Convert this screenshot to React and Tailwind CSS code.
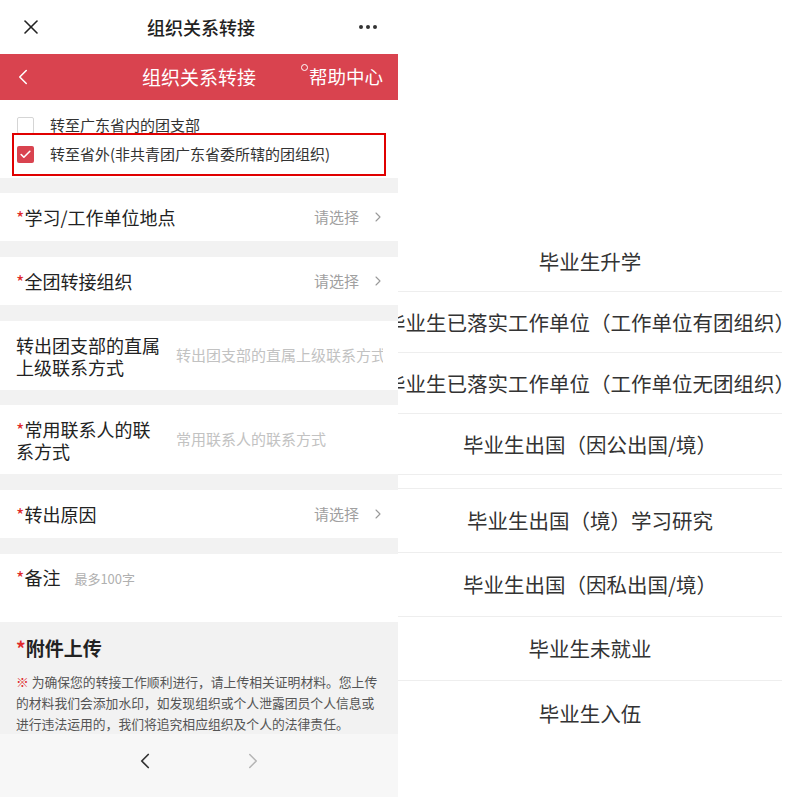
import { X, ChevronLeft, ChevronRight, Check } from "lucide-react";

const font = { fontFamily: '"Noto Sans CJK SC", "Noto Sans", sans-serif' };

const reasons = [
  "毕业生升学",
  "毕业生已落实工作单位（工作单位有团组织）",
  "毕业生已落实工作单位（工作单位无团组织）",
  "毕业生出国（因公出国/境）",
];
const reasons2 = [
  "毕业生出国（境）学习研究",
  "毕业生出国（因私出国/境）",
  "毕业生未就业",
  "毕业生入伍",
];

function Star() {
  return <span className="text-[#e02b2b]">*</span>;
}

function SelectRow({ label }) {
  return (
    <div className="flex h-[48px] items-center bg-white pl-[16px] pr-[12px]">
      <div className="flex-1 text-[18px] text-[#222]">
        <Star />
        {label}
      </div>
      <span className="text-[15px] text-[#a0a0a0]">请选择</span>
      <ChevronRight size={16} strokeWidth={1.6} className="ml-[11px] text-[#999]" />
    </div>
  );
}

function InputRow({ star, line1, line2, placeholder }) {
  return (
    <div className="flex h-[69px] items-center overflow-hidden bg-white pl-[16px] pr-[15px]">
      <div className="w-[160px] shrink-0 text-[18px] leading-[22px] text-[#222]">
        {star && <Star />}
        {line1}
        <br />
        {line2}
      </div>
      <div className="min-w-0 flex-1 overflow-hidden whitespace-nowrap text-[15px] text-[#c2c2c2]">
        {placeholder}
      </div>
    </div>
  );
}

function Gap({ h }) {
  return <div className={h} />;
}

export default function App() {
  return (
    <div className="flex h-[797px] w-[797px] overflow-hidden bg-white" style={font}>
      {/* form screen */}
      <div className="flex w-[398px] shrink-0 flex-col overflow-hidden bg-[#f2f2f2]">
        <div className="flex h-[54px] items-center justify-between bg-white px-[19px]">
          <X size={24} strokeWidth={1.6} className="text-[#222]" />
          <span className="text-[18px] font-medium text-[#222]">组织关系转接</span>
          <div className="flex gap-[3px] pr-[2px]">
            <span className="h-[4px] w-[4px] rounded-full bg-[#333]" />
            <span className="h-[4px] w-[4px] rounded-full bg-[#333]" />
            <span className="h-[4px] w-[4px] rounded-full bg-[#333]" />
          </div>
        </div>

        <div className="relative flex h-[46px] items-center justify-center bg-[#d9434f] text-white">
          <ChevronLeft size={26} strokeWidth={1.4} className="absolute left-[10px]" />
          <span className="text-[19px]">组织关系转接</span>
          <span className="absolute right-[15px] flex items-start text-[18.5px]">
            <span className="mt-[1px] mr-[1px] h-[7px] w-[7px] rounded-full border border-white" />
            帮助中心
          </span>
        </div>

        <div className="flex h-[78px] flex-col bg-white px-[12px] pt-[17px]">
          <div className="flex h-[16px] items-center pl-[5px]">
            <span className="h-[17px] w-[17px] rounded-[2px] border border-[#d5d5d5]" />
            <span className="ml-[16px] text-[15px] text-[#333]">转至广东省内的团支部</span>
          </div>
          <div className="flex h-[43px] items-center border-2 border-[#e00000] pl-[3px]">
            <span className="flex h-[17px] w-[17px] items-center justify-center rounded-[2px] bg-[#d9434f]">
              <Check size={13} strokeWidth={3} className="text-white" />
            </span>
            <span className="ml-[16px] text-[15px] text-[#333]">
              转至省外(非共青团广东省委所辖的团组织)
            </span>
          </div>
        </div>

        <Gap h="h-[15px]" />
        <SelectRow label="学习/工作单位地点" />
        <Gap h="h-[16px]" />
        <SelectRow label="全团转接组织" />
        <Gap h="h-[16px]" />
        <InputRow line1="转出团支部的直属" line2="上级联系方式" placeholder="转出团支部的直属上级联系方式" />
        <Gap h="h-[15px]" />
        <InputRow star line1="常用联系人的联" line2="系方式" placeholder="常用联系人的联系方式" />
        <Gap h="h-[16px]" />
        <SelectRow label="转出原因" />
        <Gap h="h-[16px]" />
        <div className="flex h-[68px] items-start bg-white pl-[16px] pt-[10px]">
          <span className="text-[18px] text-[#222]">
            <Star />
            备注
          </span>
          <span className="ml-[14px] mt-[5px] text-[13px] text-[#b0b0b0]">最多100字</span>
        </div>

        <div className="h-[112px] px-[16px] pt-[12px]">
          <div className="text-[19px] font-bold leading-[28px] text-[#222]">
            <Star />
            附件上传
          </div>
          <div className="mt-[9px] whitespace-nowrap text-[12.8px] leading-[21px] text-[#555]">
            <div>
              <span className="text-[#e02b2b]">※</span> 为确保您的转接工作顺利进行，请上传相关证明材料。您上传
            </div>
            <div>的材料我们会添加水印，如发现组织或个人泄露团员个人信息或</div>
            <div>进行违法运用的，我们将追究相应组织及个人的法律责任。</div>
          </div>
        </div>

        <div className="flex flex-1 items-start justify-center gap-[82px] bg-[#f7f7f7] pt-[14px]">
          <ChevronLeft size={26} strokeWidth={1.6} className="text-[#333]" />
          <ChevronRight size={26} strokeWidth={1.4} className="text-[#b5b5b5]" />
        </div>
      </div>

      {/* reason picker */}
      <div className="flex flex-1 flex-col pt-[231px]">
        <div className="w-[384px]">
          {reasons.map((r) => (
            <div
              key={r}
              className="flex h-[61px] items-center justify-center overflow-hidden border-b border-[#eeeeee] whitespace-nowrap text-[20.5px] text-[#333]"
            >
              {r}
            </div>
          ))}
          <div className="h-[14px] border-b border-[#eeeeee]" />
          {reasons2.map((r, i) => (
            <div
              key={r}
              className={`flex h-[64px] items-center justify-center overflow-hidden whitespace-nowrap text-[20.5px] text-[#333] ${
                i < reasons2.length - 1 ? "border-b border-[#eeeeee]" : ""
              }`}
            >
              {r}
            </div>
          ))}
        </div>
      </div>
    </div>
  );
}
